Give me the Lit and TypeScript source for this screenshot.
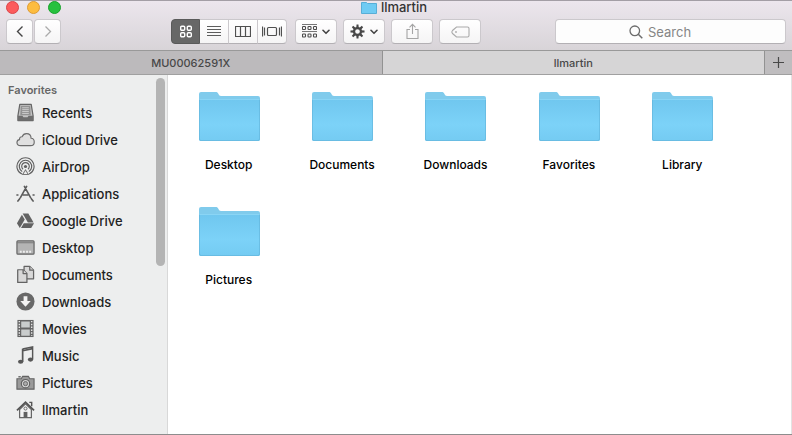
import { LitElement, html, css, svg, type TemplateResult } from "lit";
import { customElement, property, state } from "lit/decorators.js";
import { classMap } from "lit/directives/class-map.js";

const shapes: Record<string, TemplateResult> = {
  recents: svg`<path d="M4 1.500h12l2 12v5H2v-5z" fill="#c4c4c4" stroke="#666" stroke-width="1.300" stroke-linejoin="round"/><path d="M5 3h10l.5 10h-11z" fill="#929292"/><path d="M6.500 5h7M6.500 7h7M6.500 9h7M6.500 11h7" stroke="#ddd" stroke-width=".8"/><path d="M2 13.500h4.800l1 1.500h4.400l1-1.500H18v5H2z" fill="#6e6e6e"/>`,
  cloud: svg`<path d="M5 16.500C2.300 16.500 1 14.900 1 13.200c0-1.700 1.200-2.900 2.700-3.100-.2-2 1-3.200 2.700-3 .9-2.200 2.500-3.300 4.600-3.300 2.900 0 4.800 2 4.900 4.900 2 .1 3.300 1.700 3.300 3.800 0 2.400-1.600 4-3.900 4z" fill="#e0e0e0" stroke="#6c6c6c" stroke-width="1.200"/>`,
  airdrop: svg`<g fill="none" stroke="#606060" stroke-width="1.200"><path d="M6.200 18a9 9 0 1 1 7.600 0"/><path d="M6.500 15.400a6.500 6.500 0 1 1 7 0"/><path d="M7.400 12.900a4 4 0 1 1 5.200 0"/></g><circle cx="10" cy="10" r="1.700" fill="#606060"/><path d="M10 12.500l4 6.500H6z" fill="#777"/><path d="M10 14.500l2 3.500H8z" fill="#eee"/>`,
  apps: svg`<g fill="none" stroke="#5c5c5c" stroke-width="1.700" stroke-linecap="round"><path d="M11.200 2.500L4.500 14.500M8.800 2.500l6.700 12M1 11.600h1M7.500 11.600h5M18 11.600H19M3.700 15.700L2 18M16.300 15.700L18 18"/></g>`,
  drive: svg`<g fill="#626262"><path d="M7 2.500h6l5.500 9.500h-6z"/><path d="M6.200 4L1 13l3 5 5.200-9z"/><path d="M8.200 13H19l-3 5H5.200z"/></g>`,
  desktop: svg`<rect x="1" y="3" width="18" height="14" rx="1" fill="#b4b4b4" stroke="#666" stroke-width="1.300"/><path d="M1 5h18" stroke="#777"/><path d="M4 14.500h12" stroke="#ededed" stroke-width="2" stroke-dasharray="2 1.300"/>`,
  documents: svg`<g fill="#d8d8d8" stroke="#636363" stroke-width="1.300" stroke-linejoin="round"><path d="M8.500 1.500h6l4 4v9h-10z"/><path d="M14.500 1.500v4h4"/><path d="M1.800 5h5.700l4 4v9.300H1.800z"/><path d="M7.500 5v4h4"/></g>`,
  downloads: svg`<circle cx="10" cy="10" r="9.500" fill="#686868"/><path d="M8 4.500h4v5h3.500L10 15.500 4.500 9.500H8z" fill="#f3f3f3"/>`,
  movies: svg`<rect x="1.500" y="1" width="17" height="18" fill="#646464"/><path d="M5.500 2.500h9V9h-9zM5.500 11h9v6.500h-9z" fill="#c9cccc"/><path d="M3.500 2v16M16.500 2v16" stroke="#e4e4e4" stroke-width="1.500" stroke-dasharray="1.500 1.500"/>`,
  music: svg`<path d="M7 3.200L17.500 1v13" fill="none" stroke="#575757" stroke-width="1.500"/><path d="M7 3v13.500M7 5l10.500-2.300" fill="none" stroke="#575757" stroke-width="1.800"/><ellipse cx="4.900" cy="16.600" rx="2.800" ry="2.200" fill="#575757"/><ellipse cx="15.300" cy="14.300" rx="2.800" ry="2.200" fill="#575757"/>`,
  pictures: svg`<path d="M1 6h4.500L7 3.500h6L14.500 6H19v11H1z" fill="#9a9a9a" stroke="#636363" stroke-width="1.200"/><path d="M2.500 4h2.500" stroke="#636363" stroke-width="1.500"/><circle cx="10" cy="11.200" r="4.400" fill="#d4d4d4" stroke="#5f5f5f" stroke-width="1.200"/><circle cx="10" cy="11.200" r="2.200" fill="#aaa" stroke="#666"/>`,
  home: svg`<path d="M14 2.500h2.500v4" fill="none" stroke="#555" stroke-width="1.500"/><path d="M3.800 10v8.500h12.400V10L10 4z" fill="#f2f2f2" stroke="#666" stroke-width="1.300"/><path d="M1 11l9-8.800 9 8.800" fill="none" stroke="#555" stroke-width="1.800"/><circle cx="10" cy="9" r="1.600" fill="none" stroke="#666"/><path d="M8 12.500h4v6H8z" fill="#606060"/>`,
};

const places: { icon: string; name: string }[] = [
  { icon: "recents", name: "Recents" },
  { icon: "cloud", name: "iCloud Drive" },
  { icon: "airdrop", name: "AirDrop" },
  { icon: "apps", name: "Applications" },
  { icon: "drive", name: "Google Drive" },
  { icon: "desktop", name: "Desktop" },
  { icon: "documents", name: "Documents" },
  { icon: "downloads", name: "Downloads" },
  { icon: "movies", name: "Movies" },
  { icon: "music", name: "Music" },
  { icon: "pictures", name: "Pictures" },
  { icon: "home", name: "llmartin" },
];

const folders = ["Desktop", "Documents", "Downloads", "Favorites", "Library", "Pictures"];

const chevron = html`<svg width="8" height="6" viewBox="0 0 8 6" aria-hidden="true"><path d="M1 1.300l3 3 3-3" fill="none" stroke="#444" stroke-width="1.600" stroke-linecap="round" stroke-linejoin="round"/></svg>`;

const views: { label: string; glyph: TemplateResult }[] = [
  { label: "Icons", glyph: svg`<g fill="none" stroke="#fff" stroke-width="1.400"><rect x="2.700" y="2.200" width="4" height="4" rx="1"/><rect x="9.300" y="2.200" width="4" height="4" rx="1"/><rect x="2.700" y="8.800" width="4" height="4" rx="1"/><rect x="9.300" y="8.800" width="4" height="4" rx="1"/></g>` },
  { label: "List", glyph: svg`<path d="M1 2.500h14M1 5.500h14M1 8.500h14M1 11.500h14" stroke="#5d5d5d" stroke-width="1"/>` },
  { label: "Columns", glyph: svg`<path d="M.5 2.500h15v10H.5zM5.500 2.500v10M10.500 2.500v10" fill="none" stroke="#505050" stroke-width="1.200"/>` },
  { label: "Gallery", glyph: svg`<path d="M.5 2.500v10M2.500 3.500v8M17.500 3.500v8M19.500 2.500v10" stroke="#505050" stroke-width="1.200"/><rect x="5.500" y="3.500" width="9" height="8" rx="1" fill="none" stroke="#505050" stroke-width="1.200"/>` },
];

@customElement("side-bar")
class SideBar extends LitElement {
  static styles = css`
    :host { display: block; }
    .heading { margin: 0; padding: 9px 0 0 8px; font-size: 11px; line-height: 12px; font-weight: 600; color: #666; }
    .list { list-style: none; margin: 3px 0 0; padding: 0 0 8px; }
    .place { display: flex; align-items: center; gap: 7px; height: 27px; padding-left: 16px; color: #222; text-decoration: none; font-size: 13px; font-weight: 500; }
    .icon { width: 19px; height: 19px; flex: none; }
  `;
  render() {
    return html`<nav aria-label="Favorites">
      <h2 class="heading">Favorites</h2>
      <ul class="list">
        ${places.map((p) => html`<li><a class="place" href="#"><svg class="icon" viewBox="0 0 20 20" aria-hidden="true">${shapes[p.icon]}</svg>${p.name}</a></li>`)}
      </ul>
    </nav>`;
  }
}

@customElement("folder-item")
class FolderItem extends LitElement {
  @property() name = "";
  static styles = css`
    :host { display: block; }
    .item { display: flex; flex-direction: column; align-items: center; gap: 15px; width: 100%; border: 0; padding: 0; background: none; font: inherit; font-size: 12px; line-height: 16px; font-weight: 500; color: #000; }
  `;
  render() {
    return html`<button class="item">
      <svg width="62" height="50" viewBox="0 0 62 50" aria-hidden="true">
        <defs><linearGradient id="front" x1="0" y1="0" x2="0" y2="1"><stop offset="0" stop-color="#70c7ef"/><stop offset=".6" stop-color="#7cd2f8"/><stop offset="1" stop-color="#74cbf2"/></linearGradient></defs>
        <path d="M1 2a2 2 0 0 1 2-2h15.500c1.800 0 2 4 4.500 4H60a2 2 0 0 1 2 2V47a2 2 0 0 1-2 2H3a2 2 0 0 1-2-2z" fill="#80cbec"/>
        <path d="M1 8h61v39a2 2 0 0 1-2 2H3a2 2 0 0 1-2-2z" fill="url(#front)"/>
        <path d="M2 7.500h59" stroke="#8ad5f5"/>
        <path d="M1.500 8v39a1.500 1.500 0 0 0 1.500 1.500h57a1.500 1.500 0 0 0 1.500-1.500V8" fill="none" stroke="#61b2d8" stroke-opacity=".6"/>
      </svg>
      <span>${this.name}</span>
    </button>`;
  }
}

@customElement("app-root")
class AppRoot extends LitElement {
  @state() private view = 0;
  @state() private tab = 1;

  static styles = css`
    :host { display: flex; flex-direction: column; box-sizing: border-box; min-height: 100vh; font-family: Inter, "Liberation Sans", sans-serif; background: #fff; border-top: 1px solid #a39ea5; border-bottom: 1px solid #8d8d8d; }
    button { font: inherit; margin: 0; }
    .chrome { background: linear-gradient(#ece6ed, #d8d4d8); border-bottom: 1px solid #999; }
    .titlebar { display: grid; grid-template-columns: 1fr auto 1fr; align-items: center; height: 12px; padding: 0 6px; }
    .lights { display: flex; gap: 8px; }
    .light { width: 13px; height: 13px; padding: 0; border: 1px solid; border-radius: 50%; box-sizing: border-box; }
    .close { background: #fc5b5c; border-color: #dc4449; }
    .mini { background: #fdbc40; border-color: #de9b34; }
    .zoom { background: #27c13f; border-color: #18a32b; }
    .title { display: flex; align-items: center; gap: 4px; margin: 0; padding-right: 4px; font-size: 13px; line-height: 13px; font-weight: 500; color: #333; }
    .toolbar { display: flex; align-items: center; padding: 6px; height: 25px; }
    .btn { display: flex; align-items: center; justify-content: center; gap: 5px; box-sizing: border-box; height: 25px; width: 42px; padding: 0; border: 1px solid #cbc8cc; border-bottom-color: #b3b0b4; border-radius: 4px; background: linear-gradient(#fff, #f5f4f5); }
    .nav { display: flex; gap: 1px; }
    .nav .btn { width: 27px; }
    .views { display: flex; margin-left: 110px; }
    .views .btn { width: 29px; border-radius: 0; border-left-width: 0; }
    .views .btn:first-child { border-radius: 4px 0 0 4px; border-left-width: 1px; }
    .views .btn:last-child { border-radius: 0 4px 4px 0; }
    .views .on { background: #676767; border-color: #5a5a5a; }
    .tools { display: flex; gap: 6px; margin-left: 8px; }
    .search { display: flex; align-items: center; justify-content: center; gap: 5px; box-sizing: border-box; flex: 0 1 231px; height: 25px; margin-left: auto; border: 1px solid #cbc8cc; border-bottom-color: #b3b0b4; border-radius: 4px; background: #fdfdfd; }
    .field { width: 64px; padding: 0; border: 0; outline: 0; background: none; font: inherit; font-size: 13px; color: #333; }
    .field::placeholder { color: #858585; opacity: 1; }
    .tabs { display: flex; height: 23px; border-bottom: 1px solid #a0a0a0; }
    .tab { flex: 1; border: 0; border-right: 1px solid #929292; padding: 0; background: #bcbabc; font-size: 11px; font-weight: 500; color: #484848; }
    .current { background: #d6d5d6; }
    .add { display: flex; align-items: center; justify-content: center; width: 27px; border: 0; padding: 0; background: #bfbdbf; }
    .body { display: flex; flex: 1; }
    .side { display: flex; flex: none; box-sizing: border-box; width: 168px; background: #edeeee; border-right: 1px solid #d8d8d8; }
    .side side-bar { flex: 1; }
    .thumb { width: 9px; height: 188px; margin: 3px 2px 0 0; border-radius: 5px; background: #b4b4b4; }
    .files { flex: 1; display: grid; grid-template-columns: repeat(auto-fill, minmax(100px, 1fr)); align-content: start; row-gap: 34px; padding: 17px 52px 16px 4px; border-right: 1px solid #e3e3e3; }
  `;

  render() {
    return html`
      <header class="chrome">
        <div class="titlebar">
          <div class="lights">
            <button class="light close" aria-label="Close"></button>
            <button class="light mini" aria-label="Minimize"></button>
            <button class="light zoom" aria-label="Zoom"></button>
          </div>
          <h1 class="title">
            <svg width="16" height="13" viewBox="0 0 16 13" aria-hidden="true"><path d="M.5 1.500h5l1 1h9v10H.5z" fill="#6fcbf3" stroke="#58aed6"/></svg>
            llmartin
          </h1>
        </div>
        <div class="toolbar">
          <div class="nav">
            <button class="btn" aria-label="Back"><svg width="8" height="13" viewBox="0 0 8 13"><path d="M6.500 1.500l-5 5 5 5" fill="none" stroke="#444" stroke-width="1.400"/></svg></button>
            <button class="btn" aria-label="Forward"><svg width="8" height="13" viewBox="0 0 8 13"><path d="M1.500 1.500l5 5-5 5" fill="none" stroke="#aaa" stroke-width="1.300"/></svg></button>
          </div>
          <div class="views" role="group" aria-label="View">
            ${views.map((v, i) => html`<button class=${classMap({ btn: true, on: this.view === i })} aria-label=${v.label} aria-pressed=${this.view === i} @click=${() => (this.view = i)}>
              <svg width=${i === 3 ? 20 : 16} height="15" viewBox=${i === 3 ? "0 0 20 15" : "0 0 16 15"}>${v.glyph}</svg></button>`)}
          </div>
          <div class="tools">
            <button class="btn" aria-label="Arrange">
              <svg width="15" height="15" viewBox="0 0 15 15"><path d="M0 .5h15M0 7.500h15" stroke="#777"/><g fill="none" stroke="#4c4c4c" stroke-width="1.100">${[2, 7.5, 13].map((x) => svg`<rect x=${x - 1.5} y="2.500" width="3" height="3" rx=".8"/><rect x=${x - 1.5} y="10" width="3" height="3" rx=".8"/>`)}</g></svg>
              ${chevron}
            </button>
            <button class="btn" aria-label="Action">
              <svg width="15" height="15" viewBox="-8 -8 16 16">${[0, 45, 90, 135, 180, 225, 270, 315].map((a) => svg`<path d="M-1.400 -3.500L-1 -7.500H1L1.400 -3.500z" transform="rotate(${a})" fill="#484848"/>`)}<circle r="3.700" fill="none" stroke="#484848" stroke-width="2.400"/></svg>
              ${chevron}
            </button>
            <button class="btn" aria-label="Share"><svg width="13" height="17" viewBox="0 0 13 17"><path d="M4 6.500H1v9h11v-9H9M6.500 11V1.500M3.500 4.300l3-3 3 3" fill="none" stroke="#a5a5a5" stroke-width="1.100"/></svg></button>
            <button class="btn" aria-label="Tags"><svg width="19" height="12" viewBox="0 0 19 12"><path d="M5.500 1H16.500a1.500 1.500 0 0 1 1.500 1.500v7A1.500 1.500 0 0 1 16.500 11H5.500L1.500 7.500Q.3 6 1.500 4.500z" fill="none" stroke="#aaa" stroke-width="1.100"/><circle cx="5" cy="6" r=".9" fill="#aaa"/></svg></button>
          </div>
          <label class="search">
            <svg width="14" height="14" viewBox="0 0 14 14" aria-hidden="true"><circle cx="5.800" cy="5.800" r="4.800" fill="none" stroke="#6c6c6c" stroke-width="1.300"/><path d="M9.300 9.300l4 4" stroke="#6c6c6c" stroke-width="1.500"/></svg>
            <input class="field" type="text" placeholder="Search" aria-label="Search" />
          </label>
        </div>
      </header>
      <div class="tabs">
        ${["MU00062591X", "llmartin"].map((t, i) => html`<button class=${classMap({ tab: true, current: this.tab === i })} aria-pressed=${this.tab === i} @click=${() => (this.tab = i)}>${t}</button>`)}
        <button class="add" aria-label="New tab"><svg width="13" height="13" viewBox="0 0 13 13"><path d="M6.500 1v11M1 6.500h11" stroke="#484848" stroke-width="1.200"/></svg></button>
      </div>
      <div class="body">
        <aside class="side"><side-bar></side-bar><div class="thumb"></div></aside>
        <main class="files">${folders.map((f) => html`<folder-item .name=${f}></folder-item>`)}</main>
      </div>
    `;
  }
}
